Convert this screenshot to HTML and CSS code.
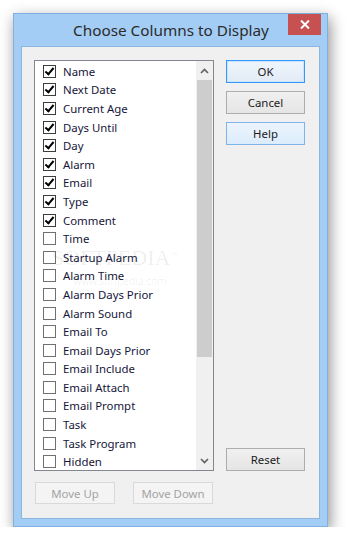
FILE: index.html
```html
<!DOCTYPE html>
<html lang="en">
<head>
  <meta charset="UTF-8" />
  <title>Choose Columns to Display</title>
  <link rel="stylesheet" href="styles.css">
</head>
<body>
  <div class="window">
    <div class="titlebar">
      <div class="title">Choose Columns to Display</div>
      <button class="close">
        <svg width="10" height="9" viewBox="0 0 10 9"><path d="M1 0.5 L9 8.5 M9 0.5 L1 8.5" stroke="#fff" stroke-width="2"/></svg>
      </button>
    </div>

    <div class="client">
      <div class="listbox">
        <ul class="items">
          <li><span class="check on"></span>Name</li>
          <li><span class="check on"></span>Next Date</li>
          <li><span class="check on"></span>Current Age</li>
          <li><span class="check on"></span>Days Until</li>
          <li><span class="check on"></span>Day</li>
          <li><span class="check on"></span>Alarm</li>
          <li><span class="check on"></span>Email</li>
          <li><span class="check on"></span>Type</li>
          <li><span class="check on"></span>Comment</li>
          <li><span class="check"></span>Time</li>
          <li><span class="check"></span>Startup Alarm</li>
          <li><span class="check"></span>Alarm Time</li>
          <li><span class="check"></span>Alarm Days Prior</li>
          <li><span class="check"></span>Alarm Sound</li>
          <li><span class="check"></span>Email To</li>
          <li><span class="check"></span>Email Days Prior</li>
          <li><span class="check"></span>Email Include</li>
          <li><span class="check"></span>Email Attach</li>
          <li><span class="check"></span>Email Prompt</li>
          <li><span class="check"></span>Task</li>
          <li><span class="check"></span>Task Program</li>
          <li><span class="check"></span>Hidden</li>
        </ul>
        <div class="scrollbar">
          <div class="arrow">
            <svg width="9" height="6" viewBox="0 0 9 6"><path d="M1 5 L4.5 1.5 L8 5" fill="none" stroke="#606060" stroke-width="1.6"/></svg>
          </div>
          <div class="track"><div class="thumb"></div></div>
          <div class="arrow">
            <svg width="9" height="6" viewBox="0 0 9 6"><path d="M1 1 L4.5 4.5 L8 1" fill="none" stroke="#606060" stroke-width="1.6"/></svg>
          </div>
        </div>
        <div class="watermark">
          <div class="wm-big">SOFTPEDIA<sup>™</sup></div>
          <div class="wm-small">www.softpedia.com</div>
        </div>
      </div>

      <div class="side">
        <button class="btn default">OK</button>
        <button class="btn">Cancel</button>
        <button class="btn hover">Help</button>
        <button class="btn reset">Reset</button>
      </div>

      <div class="moves">
        <button class="btn wide" disabled>Move Up</button>
        <button class="btn wide" disabled>Move Down</button>
      </div>
    </div>
  </div>
</body>
</html>
```

FILE: styles.css
```css
body {
  margin: 0;
  background: #fff;
  font-family: 'Noto Sans', 'Open Sans', sans-serif;
  font-size: 11.4px;
  color: #1a1a1a;
}

.window {
  box-sizing: border-box;
  width: 315px;
  height: 514px;
  margin: 13px 0 0 13px;
  background: #a4cdf5;
  border: 1px solid #7fb0e0;
  box-shadow: 2px 5px 14px rgba(0, 0, 0, 0.45);
  display: flex;
  flex-direction: column;
}

.titlebar {
  display: flex;
  align-items: flex-start;
  height: 32px;
  padding: 0 6px 0 40px;
}

.title {
  flex: 1;
  text-align: center;
  line-height: 32px;
  font-size: 15.3px;
  color: #2b2b2b;
}

.close {
  width: 33px;
  height: 21px;
  margin: 0;
  padding: 0;
  border: none;
  background: #c75050;
  display: flex;
  align-items: center;
  justify-content: center;
}

.client {
  box-sizing: border-box;
  width: 299px;
  height: 473px;
  margin-left: 7px;
  background: #f0f0f0;
  border: 1px solid #8bb6e0;
  padding: 13px 0 0 12px;
  display: grid;
  grid-template-columns: 180px 79px;
  grid-template-rows: 411px auto;
  column-gap: 12px;
}

.listbox {
  position: relative;
  box-sizing: border-box;
  border: 1px solid #828790;
  background: #fff;
  display: flex;
}

.items {
  flex: 1;
  list-style: none;
  margin: 0;
  padding: 1px 0 0 8px;
  color: #16163a;
}

.items li {
  height: 18.6px;
  display: flex;
  align-items: center;
  white-space: nowrap;
}

.check {
  position: relative;
  box-sizing: border-box;
  width: 13px;
  height: 13px;
  border: 1px solid #707070;
  background: #fff;
  margin-right: 7px;
  flex: none;
}

.check.on {
  border-color: #3c3c3c;
}

.check.on::after {
  content: "";
  position: absolute;
  left: 3px;
  top: 0px;
  width: 3px;
  height: 7px;
  border-right: 2px solid #000;
  border-bottom: 2px solid #000;
  transform: rotate(40deg);
}

.scrollbar {
  width: 17px;
  background: #f0f0f0;
  display: flex;
  flex-direction: column;
}

.arrow {
  height: 19px;
  display: flex;
  align-items: center;
  justify-content: center;
}

.track {
  flex: 1;
}

.thumb {
  height: 277px;
  margin: 0 1px;
  background: #cdcdcd;
}

.watermark {
  position: absolute;
  left: 13px;
  top: 180px;
  width: 134px;
  text-align: center;
  color: rgba(0, 0, 0, 0.07);
  pointer-events: none;
}

.wm-big {
  font-family: 'Liberation Serif', serif;
  font-size: 22px;
  line-height: 28px;
}

.wm-big sup {
  font-size: 8px;
}

.wm-small {
  font-size: 10px;
  margin: 2px 0 0 10px;
}

.side {
  display: flex;
  flex-direction: column;
  gap: 8px;
}

.btn {
  box-sizing: border-box;
  width: 79px;
  height: 23px;
  margin: 0;
  padding: 0;
  font-family: inherit;
  font-size: 11.4px;
  color: #1a1a1a;
  border: 1px solid #adadad;
  background: linear-gradient(#f0f0f0, #e5e5e5);
}

.btn.default {
  border-color: #3399ff;
  background: linear-gradient(#eef5fc, #e2ebf5);
  box-shadow: inset 0 0 0 1px #cbe4fd;
}

.btn.hover {
  border-color: #7eb4ea;
  background: linear-gradient(#ecf4fc, #dcecfc);
}

.btn.reset {
  margin-top: auto;
}

.moves {
  display: flex;
  gap: 18px;
  padding: 11px 0 0 1px;
}

.btn.wide {
  width: 80px;
  height: 22px;
}

.btn[disabled] {
  color: #a3a3a3;
  border-color: #d9d9d9;
  background: #f4f4f4;
}
```
